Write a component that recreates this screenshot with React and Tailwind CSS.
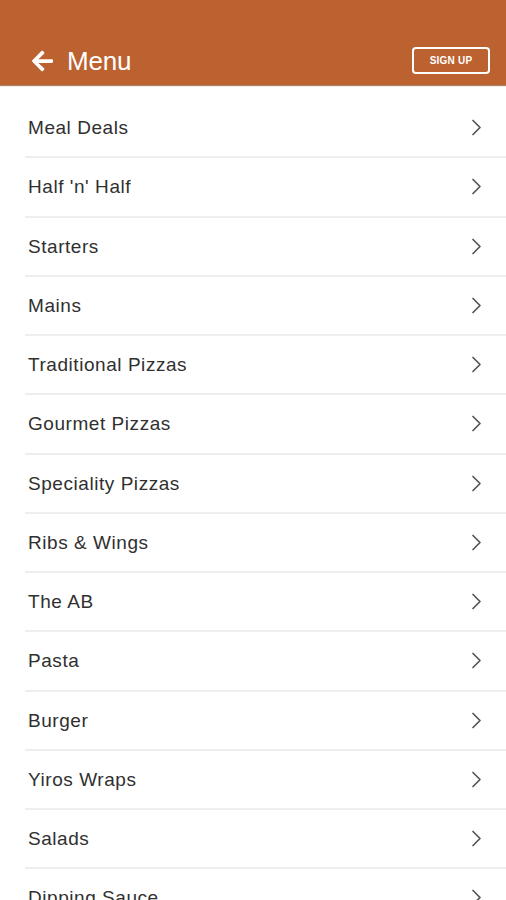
import React from "react";
import { FaArrowLeft } from "react-icons/fa";

const categories = [
  "Meal Deals",
  "Half 'n' Half",
  "Starters",
  "Mains",
  "Traditional Pizzas",
  "Gourmet Pizzas",
  "Speciality Pizzas",
  "Ribs & Wings",
  "The AB",
  "Pasta",
  "Burger",
  "Yiros Wraps",
  "Salads",
  "Dipping Sauce",
];

const Chevron = () => (
  <svg width="11" height="17" viewBox="0 0 11 17" fill="none">
    <polyline
      points="2,1.5 9,8.5 2,15.5"
      stroke="#555555"
      strokeWidth="1.7"
      strokeLinecap="round"
      strokeLinejoin="round"
    />
  </svg>
);

const App = () => {
  return (
    <div className="w-[506px] h-[900px] overflow-hidden bg-white font-['Liberation_Sans',Arial,sans-serif]">
      {/* header */}
      <div className="h-[85px] bg-[#bc6130] flex items-end pb-[10px] pl-[30px] pr-[16px] shadow-[0_1px_1px_rgba(120,50,10,0.6)] relative z-10">
        <div className="flex items-center flex-1 h-[28px]">
          <FaArrowLeft className="text-white w-[25px] h-[24px]" />
          <span className="ml-[12px] text-white text-[26px] font-light leading-none tracking-[-0.2px]">
            Menu
          </span>
        </div>
        <button className="w-[78px] h-[27px] border-2 border-white rounded-[4px] text-white text-[10px] font-bold tracking-[0.2px] flex items-center justify-center mb-[1px]">
          SIGN UP
        </button>
      </div>

      {/* list */}
      <div className="pt-[14px] pl-[25px]">
        {categories.map((name) => (
          <div
            key={name}
            className="h-[59.25px] flex items-center justify-between border-b-2 border-[#eeeeee] pl-[3px] pr-[24px]"
          >
            <span className="text-[19px] text-[#303030] leading-none tracking-[0.55px]">{name}</span>
            <Chevron />
          </div>
        ))}
      </div>
    </div>
  );
};

export default App;
